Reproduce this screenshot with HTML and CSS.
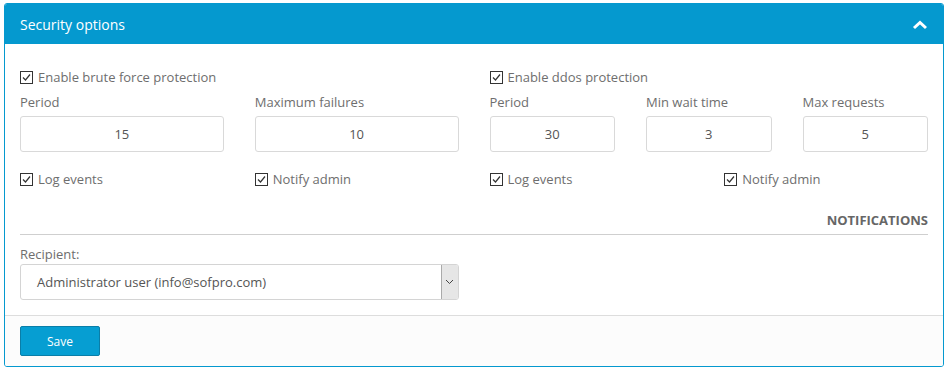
FILE: index.html
```html
<!DOCTYPE html>
<html>
<head>
<meta charset="utf-8">
<link rel="stylesheet" href="styles.css">
</head>
<body>
<div class="panel">
  <div class="panel-head">
    <span class="title">Security options</span>
    <svg class="chev" width="16" height="10" viewBox="0 0 16 10"><path d="M2 8 L8 2.5 L14 8" fill="none" stroke="#fff" stroke-width="3"/></svg>
  </div>
  <div class="panel-body">
    <div class="halves">
      <div class="half">
        <label class="check"><span class="box"><svg width="13" height="13" viewBox="0 0 13 13"><rect x="0.5" y="0.5" width="12" height="12" fill="#fff" stroke="#333"/><path d="M3 6.5 L5.5 9 L10 3.5" fill="none" stroke="#333" stroke-width="1.2"/></svg></span>Enable brute force protection</label>
        <div class="fields two">
          <div class="field"><div class="lbl">Period</div><div class="input">15</div></div>
          <div class="field"><div class="lbl">Maximum failures</div><div class="input">10</div></div>
        </div>
        <div class="checks">
          <label class="check"><span class="box"><svg width="13" height="13" viewBox="0 0 13 13"><rect x="0.5" y="0.5" width="12" height="12" fill="#fff" stroke="#333"/><path d="M3 6.5 L5.5 9 L10 3.5" fill="none" stroke="#333" stroke-width="1.2"/></svg></span>Log events</label>
          <label class="check"><span class="box"><svg width="13" height="13" viewBox="0 0 13 13"><rect x="0.5" y="0.5" width="12" height="12" fill="#fff" stroke="#333"/><path d="M3 6.5 L5.5 9 L10 3.5" fill="none" stroke="#333" stroke-width="1.2"/></svg></span>Notify admin</label>
        </div>
      </div>
      <div class="half">
        <label class="check"><span class="box"><svg width="13" height="13" viewBox="0 0 13 13"><rect x="0.5" y="0.5" width="12" height="12" fill="#fff" stroke="#333"/><path d="M3 6.5 L5.5 9 L10 3.5" fill="none" stroke="#333" stroke-width="1.2"/></svg></span>Enable ddos protection</label>
        <div class="fields three">
          <div class="field"><div class="lbl">Period</div><div class="input">30</div></div>
          <div class="field"><div class="lbl">Min wait time</div><div class="input">3</div></div>
          <div class="field"><div class="lbl">Max requests</div><div class="input">5</div></div>
        </div>
        <div class="checks">
          <label class="check"><span class="box"><svg width="13" height="13" viewBox="0 0 13 13"><rect x="0.5" y="0.5" width="12" height="12" fill="#fff" stroke="#333"/><path d="M3 6.5 L5.5 9 L10 3.5" fill="none" stroke="#333" stroke-width="1.2"/></svg></span>Log events</label>
          <label class="check"><span class="box"><svg width="13" height="13" viewBox="0 0 13 13"><rect x="0.5" y="0.5" width="12" height="12" fill="#fff" stroke="#333"/><path d="M3 6.5 L5.5 9 L10 3.5" fill="none" stroke="#333" stroke-width="1.2"/></svg></span>Notify admin</label>
        </div>
      </div>
    </div>
    <div class="section">NOTIFICATIONS</div>
    <div class="halves">
      <div class="half">
        <div class="lbl rlbl">Recipient:</div>
        <div class="select"><span class="sel-text">Administrator user (info@sofpro.com)</span><span class="arrow"><svg width="9" height="6" viewBox="0 0 9 6"><path d="M1 1 L4.5 4.5 L8 1" fill="none" stroke="#444" stroke-width="1"/></svg></span></div>
      </div>
      <div class="half"></div>
    </div>
  </div>
  <div class="panel-foot">
    <button class="btn">Save</button>
  </div>
</div>
</body>
</html>
```
FILE: styles.css
```css
* { box-sizing: border-box; }
html, body { margin: 0; padding: 0; background: #fff; }
body {
  font-family: "Open Sans", "Liberation Sans", sans-serif;
  font-size: 13px;
  color: #707070;
}
.panel {
  margin: 3px 5px 5px 4px;
  border: 1px solid #0599cf;
  border-radius: 3px;
  overflow: hidden;
}
.panel-head {
  height: 40px;
  background: #0599cf;
  display: flex;
  align-items: center;
  justify-content: space-between;
  padding: 0 15px 0 15px;
}
.title { color: #fff; font-size: 14px; }
.chev { margin-right: 0; margin-top: 1px; }
.panel-body {
  padding: 24px 15px 15px 15px;
}
.halves {
  display: grid;
  grid-template-columns: 1fr 1fr;
  column-gap: 31px;
}
.check {
  display: flex;
  align-items: center;
  line-height: 18px;
  height: 18px;
  color: #6e6e6e;
}
.box { display: inline-flex; width: 13px; height: 13px; margin-right: 5px; }
.box svg { display: block; }
.fields {
  display: grid;
  column-gap: 31px;
  margin-top: 7px;
}
.fields.two { grid-template-columns: 1fr 1fr; }
.fields.three { grid-template-columns: 1fr 1fr 1fr; }
.lbl { line-height: 18px; height: 18px; color: #6e6e6e; }
.input {
  margin-top: 5px;
  height: 36px;
  border: 1px solid #d9d9d9;
  border-radius: 3px;
  display: flex;
  align-items: center;
  justify-content: center;
  color: #555;
}
.checks {
  display: grid;
  grid-template-columns: 1fr 1fr;
  column-gap: 31px;
  margin-top: 18px;
}
.section {
  margin-top: 23px;
  text-align: right;
  font-weight: bold;
  font-size: 13px;
  line-height: 18px;
  color: #666;
  padding-bottom: 5px;
  border-bottom: 1px solid #cfcfcf;
}
.rlbl { margin-top: 10px; }
.select {
  margin-top: 1px;
  height: 36px;
  border: 1px solid #d4d4d4;
  border-radius: 3px;
  display: flex;
  align-items: stretch;
  overflow: hidden;
}
.sel-text {
  flex: 1;
  display: flex;
  align-items: center;
  padding-left: 16px;
  color: #555;
}
.arrow {
  width: 17px;
  background: #e6e6e6;
  border-left: 1px solid #aaa;
  display: flex;
  align-items: center;
  justify-content: center;
}
.panel-foot {
  background: #fcfcfc;
  border-top: 1px solid #dddddd;
  padding: 10px 15px 10px 15px;
}
.btn {
  display: block;
  width: 80px;
  height: 30px;
  background: #069ed2;
  border: 1px solid #0a7ea8;
  border-radius: 2px;
  color: #fff;
  font-family: "Open Sans", "Liberation Sans", sans-serif;
  font-size: 12px;
  padding: 0;
}
```
